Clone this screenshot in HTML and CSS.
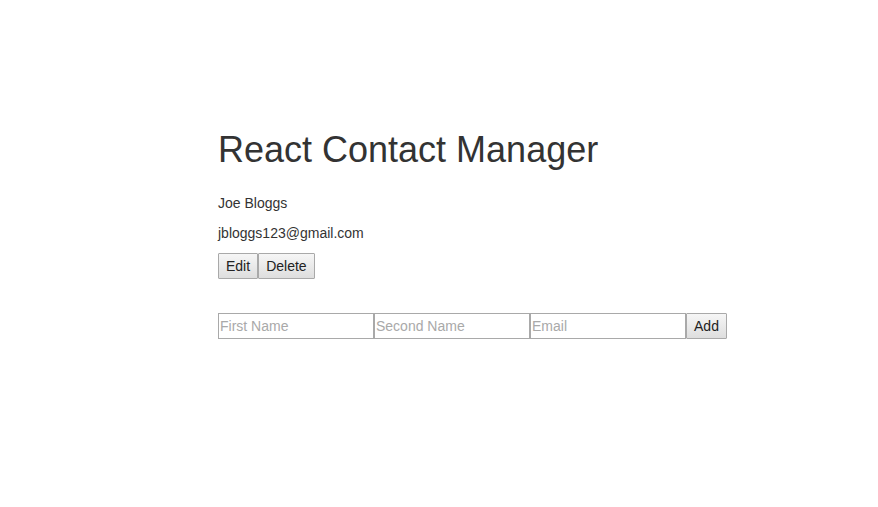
FILE: index.html
```html
<!DOCTYPE html>
<html>
<head>
<meta charset="utf-8">
<link rel="stylesheet" href="styles.css">
</head>
<body>
<div class="app">
  <h1 class="title">React Contact Manager</h1>
  <div class="contact">
    <p class="line">Joe Bloggs</p>
    <p class="line">jbloggs123@gmail.com</p>
    <div class="actions">
      <button class="btn">Edit</button><button class="btn">Delete</button>
    </div>
  </div>
  <form class="add-form">
    <input class="field" placeholder="First Name"><input class="field" placeholder="Second Name"><input class="field" placeholder="Email"><button class="btn btn-add" type="button">Add</button>
  </form>
</div>
</body>
</html>
```

FILE: styles.css
```css
html, body {
  margin: 0;
  padding: 0;
  background: #fff;
}
body {
  font-family: "Liberation Sans", Arial, sans-serif;
  font-size: 14px;
  line-height: 1.42857;
  color: #333;
}
.app {
  padding: 110px 0 0 218px;
}
.title {
  font-size: 36px;
  font-weight: 400;
  line-height: 1.1;
  margin: 20px 0 10px;
  color: #333;
}
.line {
  margin: 0 0 10px;
}
.contact {
  padding-top: 14px;
}
.actions {
  display: flex;
  margin-top: -1px;
}
.btn {
  font-family: "Liberation Sans", Arial, sans-serif;
  font-size: 14px;
  color: #222;
  height: 26px;
  padding: 0 7px;
  margin: 0;
  border: 1px solid #a9a9a9;
  border-radius: 1px;
  background: linear-gradient(#f6f6f6, #dedede);
}
.add-form {
  display: flex;
  margin-top: 34px;
}
.field {
  width: 156px;
  height: 26px;
  box-sizing: border-box;
  margin: 0;
  padding: 0 1px;
  border: 1px solid #a9a9a9;
  font-family: "Liberation Sans", Arial, sans-serif;
  font-size: 14px;
  color: #333;
}
.field::placeholder {
  color: #a9a9a9;
}
.btn-add {
  width: 41px;
  padding: 0;
}
```
